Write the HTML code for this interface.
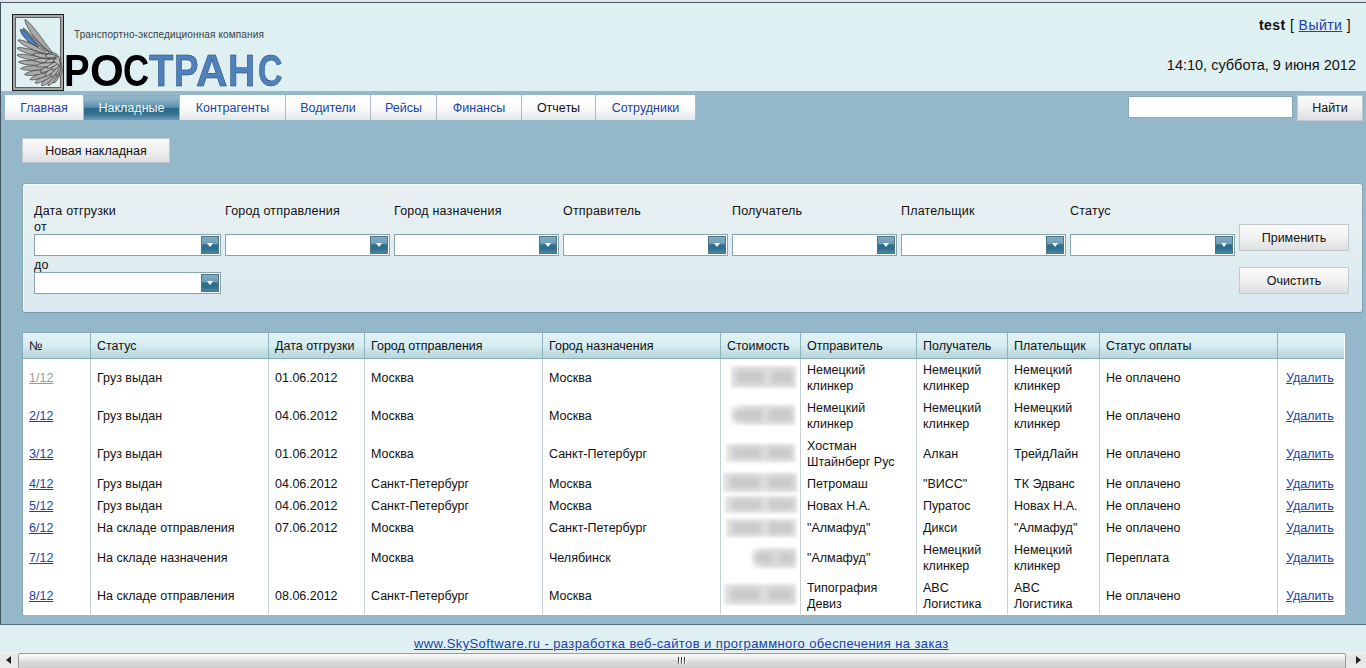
<!DOCTYPE html>
<html><head><meta charset="utf-8">
<style>
*{box-sizing:border-box;margin:0;padding:0}
html,body{width:1366px;height:668px;overflow:hidden;background:#dff0f3;font-family:"Liberation Sans",sans-serif;font-size:12.5px;color:#111}
.abs{position:absolute}
#topstrip{left:0;top:0;width:1366px;height:2px;background:#e2e2ea}
#topline{left:0;top:2px;width:1366px;height:1px;background:#4b5b66}
#leftline{left:0;top:2px;width:1px;height:623px;background:#3f525e}
#main{left:1px;top:91px;width:1365px;height:533px;background:#94b7ca}
#botline{left:0;top:624px;width:1366px;height:1px;background:#5a7482}
a{color:#2141a9;text-decoration:underline}
.tab{position:absolute;top:95px;height:25px;padding-top:1px;background:linear-gradient(#ffffff 0%,#fbfbfb 50%,#e4e7e9 100%);border-right:1px solid #aab8bf;text-align:center;line-height:24px;color:#2142a8;font-size:12.5px}
.tab.act{background:linear-gradient(#87a9bb 0%,#93b7c9 12%,#6b9bb5 40%,#4f88a6 52%,#2a6b8c 54%,#336f8f 75%,#6a9db8 100%);color:#eef8fb}
.btn{position:absolute;background:linear-gradient(#fafafa 0%,#f2f2f2 45%,#dcdfe1 100%);border:1px solid #c2c8cc;text-align:center;color:#111}
.sel{position:absolute;height:22px;background:#fff;border:1px solid #86a6ac}
.sel i{position:absolute;right:1px;top:1px;width:18px;height:18px;border:1px solid #4f7488;background:linear-gradient(#82acc3 0%,#6d9bb5 45%,#2e6e8d 48%,#2f6f8e 75%,#4a87a6 100%)}
.sel i:after{content:"";position:absolute;left:5px;top:6px;border-left:3.5px solid transparent;border-right:3.5px solid transparent;border-top:4px solid #fff}
.lg{font-size:44px;font-weight:bold;line-height:60px;transform-origin:0 0;white-space:nowrap}
.lbl{position:absolute;font-size:12.5px;color:#111;letter-spacing:0.2px}

.thead{background:linear-gradient(#e0f2f5 0%,#d8eef2 45%,#b6d5db 100%);border-bottom:1px solid #89adb5}
.th{height:25px;line-height:27px;white-space:nowrap;color:#111}
.vl{width:1px;background:#c6cfd4}
.td{display:flex;align-items:center;line-height:16px;white-space:nowrap;color:#111}
.lnk{color:#2141a9;text-decoration:underline}
.lnk.v{color:#9a9a9a}
.blur{background:#e4e4e6;filter:blur(1.8px)}
.blur .b1,.blur .b2{position:absolute;top:18%;height:64%;background:#c9c9cc;filter:blur(2.5px)}
.blur .b1{left:8%;width:44%}
.blur .b2{left:60%;width:36%}
.blur.soft{background:linear-gradient(90deg,#fff 0%,#e2e2e4 30%)}
</style></head><body>
<div id="topstrip" class="abs"></div>
<div id="topline" class="abs"></div>
<div id="main" class="abs"></div>
<div id="leftline" class="abs"></div>
<div id="botline" class="abs"></div>

<!-- header -->
<div class="abs" style="left:12px;top:14px;width:52px;height:77px;border:1px solid #1d1d1d;background:#dff0f3">
  <div class="abs" style="left:0;top:0;right:0;bottom:0;border:2px solid #a4a8a8"></div>
  <div class="abs" style="left:2px;top:2px;right:2px;bottom:2px;border:1px solid #5e5e5e"></div>
</div>
<svg class="abs" style="left:0;top:0" width="70" height="95" viewBox="0 0 70 95"><path d="M53.0,53.0 C47.2,46.5 30.8,21.5 25.0,19.5 C24.5,26.8 42.9,50.0 53.0,53.0Z" fill="#a9a9a9" stroke="#3a3a3a" stroke-width="0.7"/><path d="M49.0,52.0 C43.4,47.6 27.3,29.6 23.0,28.0 C24.1,33.1 41.3,49.9 49.0,52.0Z" fill="#8c8c8c" stroke="#3a3a3a" stroke-width="0.7"/><path d="M38.0,47.0 C35.4,42.6 25.0,29.2 20.5,29.5 C19.7,34.5 31.8,46.2 38.0,47.0Z" fill="#4f81bd" stroke="#1f344c" stroke-width="0.7"/><path d="M27,42 Q33,46 39,47.5" fill="none" stroke="#1a1a1a" stroke-width="1"/><path d="M61.0,66.0 C58.3,67.7 55.3,74.9 58.5,77.0 C62.3,76.5 63.0,68.8 61.0,66.0Z" fill="#acacac" stroke="#3a3a3a" stroke-width="0.7"/><path d="M60.0,68.0 C56.6,70.1 51.0,79.8 53.5,83.0 C57.6,82.7 61.1,72.0 60.0,68.0Z" fill="#acacac" stroke="#3a3a3a" stroke-width="0.7"/><path d="M59.0,70.0 C55.0,71.8 46.4,81.6 48.0,85.5 C52.3,85.8 58.9,74.6 59.0,70.0Z" fill="#acacac" stroke="#3a3a3a" stroke-width="0.7"/><path d="M58.0,71.0 C53.3,72.3 41.1,81.1 41.5,85.5 C45.9,86.5 56.4,75.9 58.0,71.0Z" fill="#acacac" stroke="#3a3a3a" stroke-width="0.7"/><path d="M57.0,71.0 C51.6,71.5 36.0,78.5 35.0,83.0 C39.4,84.8 53.9,75.7 57.0,71.0Z" fill="#acacac" stroke="#3a3a3a" stroke-width="0.7"/><path d="M56.0,70.0 C50.1,69.9 31.9,75.1 30.0,79.5 C34.4,81.8 51.7,74.4 56.0,70.0Z" fill="#acacac" stroke="#3a3a3a" stroke-width="0.7"/><path d="M55.0,69.0 C48.5,68.0 27.5,70.4 24.5,74.5 C28.8,77.5 49.4,72.8 55.0,69.0Z" fill="#acacac" stroke="#3a3a3a" stroke-width="0.7"/><path d="M54.0,67.0 C47.2,65.2 24.4,64.8 20.5,68.5 C24.7,72.0 47.4,70.0 54.0,67.0Z" fill="#acacac" stroke="#3a3a3a" stroke-width="0.7"/><path d="M53.0,64.0 C46.2,61.5 22.8,58.7 18.5,62.0 C22.4,65.9 45.9,66.3 53.0,64.0Z" fill="#acacac" stroke="#3a3a3a" stroke-width="0.7"/><path d="M52.0,61.0 C45.3,57.8 21.8,52.3 17.0,55.0 C20.6,59.4 44.5,62.5 52.0,61.0Z" fill="#acacac" stroke="#3a3a3a" stroke-width="0.7"/><path d="M50.0,57.0 C43.9,53.2 21.9,45.7 17.0,48.0 C20.0,52.7 42.7,57.8 50.0,57.0Z" fill="#acacac" stroke="#3a3a3a" stroke-width="0.7"/><path d="M48.0,54.0 C42.9,49.3 23.1,38.5 18.0,40.0 C20.0,45.0 40.8,53.7 48.0,54.0Z" fill="#acacac" stroke="#3a3a3a" stroke-width="0.7"/><path d="M61.0,63.0 C58.1,64.6 53.6,72.3 56.0,75.0 C59.6,74.8 62.1,66.3 61.0,63.0Z" fill="#b3b3b3" stroke="#3a3a3a" stroke-width="0.7"/><path d="M60.0,64.0 C56.6,65.5 49.5,73.6 51.0,77.0 C54.8,77.3 60.1,67.9 60.0,64.0Z" fill="#b3b3b3" stroke="#3a3a3a" stroke-width="0.7"/><path d="M59.0,64.0 C54.9,64.9 44.6,72.1 45.0,76.0 C48.8,77.1 57.7,68.2 59.0,64.0Z" fill="#b3b3b3" stroke="#3a3a3a" stroke-width="0.7"/><path d="M58.0,64.0 C53.6,63.8 40.9,68.1 40.0,72.0 C43.5,74.1 55.4,67.8 58.0,64.0Z" fill="#b3b3b3" stroke="#3a3a3a" stroke-width="0.7"/><path d="M58.0,63.0 C53.3,61.7 38.2,62.5 36.0,66.0 C39.1,68.9 53.9,66.0 58.0,63.0Z" fill="#b3b3b3" stroke="#3a3a3a" stroke-width="0.7"/><path d="M57.0,61.0 C52.5,58.9 36.9,57.0 34.0,60.0 C36.6,63.4 52.3,63.2 57.0,61.0Z" fill="#b3b3b3" stroke="#3a3a3a" stroke-width="0.7"/><path d="M56.0,58.0 C51.7,55.3 36.3,51.4 33.0,54.0 C35.2,57.7 51.0,59.6 56.0,58.0Z" fill="#b3b3b3" stroke="#3a3a3a" stroke-width="0.7"/><path d="M61.0,62.0 C58.0,62.3 51.3,67.0 52.0,70.0 C54.9,71.1 60.4,64.9 61.0,62.0Z" fill="#b8b8b8" stroke="#3a3a3a" stroke-width="0.7"/><path d="M60.0,61.0 C56.5,60.8 47.3,64.8 47.0,68.0 C49.8,69.5 58.3,64.0 60.0,61.0Z" fill="#b8b8b8" stroke="#3a3a3a" stroke-width="0.7"/><path d="M59.0,59.0 C55.8,57.8 46.1,59.0 45.0,62.0 C47.2,64.3 56.6,61.4 59.0,59.0Z" fill="#b8b8b8" stroke="#3a3a3a" stroke-width="0.7"/><path d="M57.0,56.0 C54.6,54.2 46.4,53.3 45.0,56.0 C46.4,58.7 54.6,57.8 57.0,56.0Z" fill="#b8b8b8" stroke="#3a3a3a" stroke-width="0.7"/><path d="M48,53 Q56,51 59,57 Q60,61 60.5,66 Q56,64 53,60 Q57,59 57.5,56.5 Q54,54 48,53Z" fill="#b5b5b5" stroke="#3a3a3a" stroke-width="0.7"/></svg>
<div class="abs" style="left:74px;top:29px;font-size:10px;letter-spacing:0.13px;color:#343f44;white-space:nowrap">Транспортно-экспедиционная компания</div>
<div class="abs lg" style="left:64.1px;top:41px;color:#000;transform:scaleX(0.871)">Р</div>
<div class="abs lg" style="left:89.7px;top:41px;color:#000;transform:scaleX(0.986)">О</div>
<div class="abs lg" style="left:123.1px;top:41px;color:#000;transform:scaleX(0.822)">С</div>
<div class="abs lg" style="left:148.6px;top:41px;color:#4f81bd;-webkit-text-stroke:0.5px #22406a;transform:scaleX(0.908)">Т</div>
<div class="abs lg" style="left:173.8px;top:41px;color:#4f81bd;-webkit-text-stroke:0.5px #22406a;transform:scaleX(0.833)">Р</div>
<div class="abs lg" style="left:195.7px;top:41px;color:#4f81bd;-webkit-text-stroke:0.5px #22406a;transform:scaleX(0.993)">А</div>
<div class="abs lg" style="left:227.7px;top:41px;color:#4f81bd;-webkit-text-stroke:0.5px #22406a;transform:scaleX(0.856)">Н</div>
<div class="abs lg" style="left:258.3px;top:41px;color:#4f81bd;-webkit-text-stroke:0.5px #22406a;transform:scaleX(0.770)">С</div>
<div class="abs" style="right:15px;top:17px;font-size:14px;letter-spacing:0.45px;white-space:nowrap;color:#111"><b>test</b> [ <a href="#">Выйти</a> ]</div>
<div class="abs" style="right:10px;top:57px;font-size:14.5px;white-space:nowrap;color:#111">14:10, суббота, 9 июня 2012</div>

<!-- nav -->
<div class="tab" style="left:5px;width:79px">Главная</div>
<div class="tab act" style="left:84px;width:96px">Накладные</div>
<div class="tab" style="left:180px;width:106px">Контрагенты</div>
<div class="tab" style="left:286px;width:85px">Водители</div>
<div class="tab" style="left:371px;width:66px">Рейсы</div>
<div class="tab" style="left:437px;width:85px">Финансы</div>
<div class="tab" style="left:522px;width:74px;color:#111">Отчеты</div>
<div class="tab" style="left:596px;width:100px">Сотрудники</div>

<div class="abs" style="left:1128px;top:96px;width:165px;height:22px;background:#fff;border:1px solid #88a8b8"></div>
<div class="btn" style="left:1297px;top:95px;width:66px;height:26px;line-height:24px">Найти</div>

<div class="btn" style="left:22px;top:138px;width:148px;height:25px;line-height:24px">Новая накладная</div>

<!-- filter panel -->
<div class="abs" style="left:22px;top:183px;width:1341px;height:130px;background:linear-gradient(#eaf1f3,#d9e9ef);border-radius:3px;border:1px solid #86a7b8;border-bottom-color:#7896a6;box-shadow:inset 1px 1px 0 #f6fbfc"></div>
<div class="lbl" style="left:34px;top:204px">Дата отгрузки</div>
<div class="lbl" style="left:34px;top:220px">от</div>
<div class="lbl" style="left:34px;top:258px">до</div>
<div class="lbl" style="left:225px;top:204px">Город отправления</div>
<div class="lbl" style="left:394px;top:204px">Город назначения</div>
<div class="lbl" style="left:563px;top:204px">Отправитель</div>
<div class="lbl" style="left:732px;top:204px">Получатель</div>
<div class="lbl" style="left:901px;top:204px">Плательщик</div>
<div class="lbl" style="left:1070px;top:204px">Статус</div>
<div class="sel" style="left:34px;top:234px;width:187px"><i></i></div>
<div class="sel" style="left:34px;top:272px;width:187px"><i></i></div>
<div class="sel" style="left:225px;top:234px;width:165px"><i></i></div>
<div class="sel" style="left:394px;top:234px;width:165px"><i></i></div>
<div class="sel" style="left:563px;top:234px;width:165px"><i></i></div>
<div class="sel" style="left:732px;top:234px;width:165px"><i></i></div>
<div class="sel" style="left:901px;top:234px;width:165px"><i></i></div>
<div class="sel" style="left:1070px;top:234px;width:165px"><i></i></div>
<div class="btn" style="left:1239px;top:224px;width:110px;height:27px;line-height:27px">Применить</div>
<div class="btn" style="left:1239px;top:267px;width:110px;height:27px;line-height:27px">Очистить</div>

<!-- TABLE -->
<div class="abs" style="left:22px;top:332px;width:1323px;height:283px;background:#fff;border:1px solid #86a8b8;border-right:none;border-bottom:none"></div>
<div class="abs thead" style="left:23px;top:333px;width:1321px;height:26px"></div>
<div class="abs th" style="left:29px;top:333px">№</div>
<div class="abs vl" style="left:90px;top:333px;height:26px;background:#8fb3bb"></div>
<div class="abs th" style="left:97px;top:333px">Статус</div>
<div class="abs vl" style="left:268px;top:333px;height:26px;background:#8fb3bb"></div>
<div class="abs th" style="left:275px;top:333px">Дата отгрузки</div>
<div class="abs vl" style="left:364px;top:333px;height:26px;background:#8fb3bb"></div>
<div class="abs th" style="left:371px;top:333px">Город отправления</div>
<div class="abs vl" style="left:542px;top:333px;height:26px;background:#8fb3bb"></div>
<div class="abs th" style="left:549px;top:333px">Город назначения</div>
<div class="abs vl" style="left:720px;top:333px;height:26px;background:#8fb3bb"></div>
<div class="abs th" style="left:727px;top:333px">Стоимость</div>
<div class="abs vl" style="left:800px;top:333px;height:26px;background:#8fb3bb"></div>
<div class="abs th" style="left:807px;top:333px">Отправитель</div>
<div class="abs vl" style="left:916px;top:333px;height:26px;background:#8fb3bb"></div>
<div class="abs th" style="left:923px;top:333px">Получатель</div>
<div class="abs vl" style="left:1007px;top:333px;height:26px;background:#8fb3bb"></div>
<div class="abs th" style="left:1014px;top:333px">Плательщик</div>
<div class="abs vl" style="left:1099px;top:333px;height:26px;background:#8fb3bb"></div>
<div class="abs th" style="left:1106px;top:333px">Статус оплаты</div>
<div class="abs vl" style="left:1277px;top:333px;height:26px;background:#8fb3bb"></div>
<div class="abs th" style="left:1284px;top:333px"></div>
<div class="abs td" style="left:29px;top:359px;height:38px"><div><a class="lnk v">1/12</a></div></div>
<div class="abs td" style="left:97px;top:359px;height:38px"><div>Груз выдан</div></div>
<div class="abs td" style="left:275px;top:359px;height:38px"><div>01.06.2012</div></div>
<div class="abs td" style="left:371px;top:359px;height:38px"><div>Москва</div></div>
<div class="abs td" style="left:549px;top:359px;height:38px"><div>Москва</div></div>
<div class="abs td" style="left:807px;top:359px;height:38px"><div>Немецкий<br>клинкер</div></div>
<div class="abs td" style="left:923px;top:359px;height:38px"><div>Немецкий<br>клинкер</div></div>
<div class="abs td" style="left:1014px;top:359px;height:38px"><div>Немецкий<br>клинкер</div></div>
<div class="abs td" style="left:1106px;top:359px;height:38px"><div>Не оплачено</div></div>
<div class="abs td" style="left:1286px;top:359px;height:38px"><div><a class="lnk">Удалить</a></div></div>
<div class="abs td" style="left:29px;top:397px;height:38px"><div><a class="lnk">2/12</a></div></div>
<div class="abs td" style="left:97px;top:397px;height:38px"><div>Груз выдан</div></div>
<div class="abs td" style="left:275px;top:397px;height:38px"><div>04.06.2012</div></div>
<div class="abs td" style="left:371px;top:397px;height:38px"><div>Москва</div></div>
<div class="abs td" style="left:549px;top:397px;height:38px"><div>Москва</div></div>
<div class="abs td" style="left:807px;top:397px;height:38px"><div>Немецкий<br>клинкер</div></div>
<div class="abs td" style="left:923px;top:397px;height:38px"><div>Немецкий<br>клинкер</div></div>
<div class="abs td" style="left:1014px;top:397px;height:38px"><div>Немецкий<br>клинкер</div></div>
<div class="abs td" style="left:1106px;top:397px;height:38px"><div>Не оплачено</div></div>
<div class="abs td" style="left:1286px;top:397px;height:38px"><div><a class="lnk">Удалить</a></div></div>
<div class="abs td" style="left:29px;top:435px;height:38px"><div><a class="lnk">3/12</a></div></div>
<div class="abs td" style="left:97px;top:435px;height:38px"><div>Груз выдан</div></div>
<div class="abs td" style="left:275px;top:435px;height:38px"><div>01.06.2012</div></div>
<div class="abs td" style="left:371px;top:435px;height:38px"><div>Москва</div></div>
<div class="abs td" style="left:549px;top:435px;height:38px"><div>Санкт-Петербург</div></div>
<div class="abs td" style="left:807px;top:435px;height:38px"><div>Хостман<br>Штайнберг Рус</div></div>
<div class="abs td" style="left:923px;top:435px;height:38px"><div>Алкан</div></div>
<div class="abs td" style="left:1014px;top:435px;height:38px"><div>ТрейдЛайн</div></div>
<div class="abs td" style="left:1106px;top:435px;height:38px"><div>Не оплачено</div></div>
<div class="abs td" style="left:1286px;top:435px;height:38px"><div><a class="lnk">Удалить</a></div></div>
<div class="abs td" style="left:29px;top:473px;height:22px"><div><a class="lnk">4/12</a></div></div>
<div class="abs td" style="left:97px;top:473px;height:22px"><div>Груз выдан</div></div>
<div class="abs td" style="left:275px;top:473px;height:22px"><div>04.06.2012</div></div>
<div class="abs td" style="left:371px;top:473px;height:22px"><div>Санкт-Петербург</div></div>
<div class="abs td" style="left:549px;top:473px;height:22px"><div>Москва</div></div>
<div class="abs td" style="left:807px;top:473px;height:22px"><div>Петромаш</div></div>
<div class="abs td" style="left:923px;top:473px;height:22px"><div>"ВИСС"</div></div>
<div class="abs td" style="left:1014px;top:473px;height:22px"><div>ТК Эдванс</div></div>
<div class="abs td" style="left:1106px;top:473px;height:22px"><div>Не оплачено</div></div>
<div class="abs td" style="left:1286px;top:473px;height:22px"><div><a class="lnk">Удалить</a></div></div>
<div class="abs td" style="left:29px;top:495px;height:22px"><div><a class="lnk">5/12</a></div></div>
<div class="abs td" style="left:97px;top:495px;height:22px"><div>Груз выдан</div></div>
<div class="abs td" style="left:275px;top:495px;height:22px"><div>04.06.2012</div></div>
<div class="abs td" style="left:371px;top:495px;height:22px"><div>Санкт-Петербург</div></div>
<div class="abs td" style="left:549px;top:495px;height:22px"><div>Москва</div></div>
<div class="abs td" style="left:807px;top:495px;height:22px"><div>Новах Н.А.</div></div>
<div class="abs td" style="left:923px;top:495px;height:22px"><div>Пуратос</div></div>
<div class="abs td" style="left:1014px;top:495px;height:22px"><div>Новах Н.А.</div></div>
<div class="abs td" style="left:1106px;top:495px;height:22px"><div>Не оплачено</div></div>
<div class="abs td" style="left:1286px;top:495px;height:22px"><div><a class="lnk">Удалить</a></div></div>
<div class="abs td" style="left:29px;top:517px;height:22px"><div><a class="lnk">6/12</a></div></div>
<div class="abs td" style="left:97px;top:517px;height:22px"><div>На складе отправления</div></div>
<div class="abs td" style="left:275px;top:517px;height:22px"><div>07.06.2012</div></div>
<div class="abs td" style="left:371px;top:517px;height:22px"><div>Москва</div></div>
<div class="abs td" style="left:549px;top:517px;height:22px"><div>Санкт-Петербург</div></div>
<div class="abs td" style="left:807px;top:517px;height:22px"><div>"Алмафуд"</div></div>
<div class="abs td" style="left:923px;top:517px;height:22px"><div>Дикси</div></div>
<div class="abs td" style="left:1014px;top:517px;height:22px"><div>"Алмафуд"</div></div>
<div class="abs td" style="left:1106px;top:517px;height:22px"><div>Не оплачено</div></div>
<div class="abs td" style="left:1286px;top:517px;height:22px"><div><a class="lnk">Удалить</a></div></div>
<div class="abs td" style="left:29px;top:539px;height:38px"><div><a class="lnk">7/12</a></div></div>
<div class="abs td" style="left:97px;top:539px;height:38px"><div>На складе назначения</div></div>
<div class="abs td" style="left:275px;top:539px;height:38px"><div></div></div>
<div class="abs td" style="left:371px;top:539px;height:38px"><div>Москва</div></div>
<div class="abs td" style="left:549px;top:539px;height:38px"><div>Челябинск</div></div>
<div class="abs td" style="left:807px;top:539px;height:38px"><div>"Алмафуд"</div></div>
<div class="abs td" style="left:923px;top:539px;height:38px"><div>Немецкий<br>клинкер</div></div>
<div class="abs td" style="left:1014px;top:539px;height:38px"><div>Немецкий<br>клинкер</div></div>
<div class="abs td" style="left:1106px;top:539px;height:38px"><div>Переплата</div></div>
<div class="abs td" style="left:1286px;top:539px;height:38px"><div><a class="lnk">Удалить</a></div></div>
<div class="abs td" style="left:29px;top:577px;height:38px"><div><a class="lnk">8/12</a></div></div>
<div class="abs td" style="left:97px;top:577px;height:38px"><div>На складе отправления</div></div>
<div class="abs td" style="left:275px;top:577px;height:38px"><div>08.06.2012</div></div>
<div class="abs td" style="left:371px;top:577px;height:38px"><div>Санкт-Петербург</div></div>
<div class="abs td" style="left:549px;top:577px;height:38px"><div>Москва</div></div>
<div class="abs td" style="left:807px;top:577px;height:38px"><div>Типография<br>Девиз</div></div>
<div class="abs td" style="left:923px;top:577px;height:38px"><div>ABC<br>Логистика</div></div>
<div class="abs td" style="left:1014px;top:577px;height:38px"><div>ABC<br>Логистика</div></div>
<div class="abs td" style="left:1106px;top:577px;height:38px"><div>Не оплачено</div></div>
<div class="abs td" style="left:1286px;top:577px;height:38px"><div><a class="lnk">Удалить</a></div></div>
<div class="abs vl" style="left:90px;top:359px;height:255px"></div>
<div class="abs vl" style="left:268px;top:359px;height:255px"></div>
<div class="abs vl" style="left:364px;top:359px;height:255px"></div>
<div class="abs vl" style="left:542px;top:359px;height:255px"></div>
<div class="abs vl" style="left:720px;top:359px;height:255px"></div>
<div class="abs vl" style="left:800px;top:359px;height:255px"></div>
<div class="abs vl" style="left:916px;top:359px;height:255px"></div>
<div class="abs vl" style="left:1007px;top:359px;height:255px"></div>
<div class="abs vl" style="left:1099px;top:359px;height:255px"></div>
<div class="abs vl" style="left:1277px;top:359px;height:255px"></div>
<div class="abs blur" style="left:731px;top:366px;width:65px;height:22px"><span class="b1"></span><span class="b2"></span></div>
<div class="abs blur soft" style="left:728px;top:405px;width:67px;height:20px"><span class="b1"></span><span class="b2"></span></div>
<div class="abs blur" style="left:726px;top:444px;width:69px;height:18px"><span class="b1"></span><span class="b2"></span></div>
<div class="abs blur" style="left:723px;top:473px;width:74px;height:19px"><span class="b1"></span><span class="b2"></span></div>
<div class="abs blur" style="left:725px;top:496px;width:72px;height:17px"><span class="b1"></span><span class="b2"></span></div>
<div class="abs blur" style="left:726px;top:519px;width:70px;height:18px"><span class="b1"></span><span class="b2"></span></div>
<div class="abs blur soft" style="left:750px;top:548px;width:46px;height:20px"><span class="b1"></span><span class="b2"></span></div>
<div class="abs blur" style="left:724px;top:584px;width:72px;height:21px"><span class="b1"></span><span class="b2"></span></div>

<!-- footer -->
<div class="abs" style="left:414px;top:636px;font-size:13px;letter-spacing:0.4px;white-space:nowrap;line-height:16px"><a href="#">www.SkySoftware.ru - разработка веб-сайтов и программного обеспечения на заказ</a></div>

<!-- scrollbar -->
<div class="abs" style="left:0;top:652px;width:1366px;height:16px;background:linear-gradient(#f2f2f2,#e6e6e6 30%,#ebebeb)"></div>
<div class="abs" style="left:6px;top:656px;width:0;height:0;border-top:4px solid transparent;border-bottom:4px solid transparent;border-right:5px solid #222"></div>
<div class="abs" style="left:1356px;top:656px;width:0;height:0;border-top:4px solid transparent;border-bottom:4px solid transparent;border-left:5px solid #222"></div>
<div class="abs" style="left:18px;top:653px;width:1328px;height:16px;border:1px solid #9a9a9a;border-radius:2px;background:linear-gradient(#fafafa 0%,#f0f0f0 30%,#dedede 48%,#cdcdcd 100%)"></div>
<div class="abs" style="left:678px;top:657px;width:1px;height:7px;background:linear-gradient(#1e1e1e,#7a7a7a);box-shadow:1px 0 0 #fff"></div>
<div class="abs" style="left:681px;top:657px;width:1px;height:7px;background:linear-gradient(#1e1e1e,#7a7a7a);box-shadow:1px 0 0 #fff"></div>
<div class="abs" style="left:684px;top:657px;width:1px;height:7px;background:linear-gradient(#1e1e1e,#7a7a7a);box-shadow:1px 0 0 #fff"></div>
</body></html>
